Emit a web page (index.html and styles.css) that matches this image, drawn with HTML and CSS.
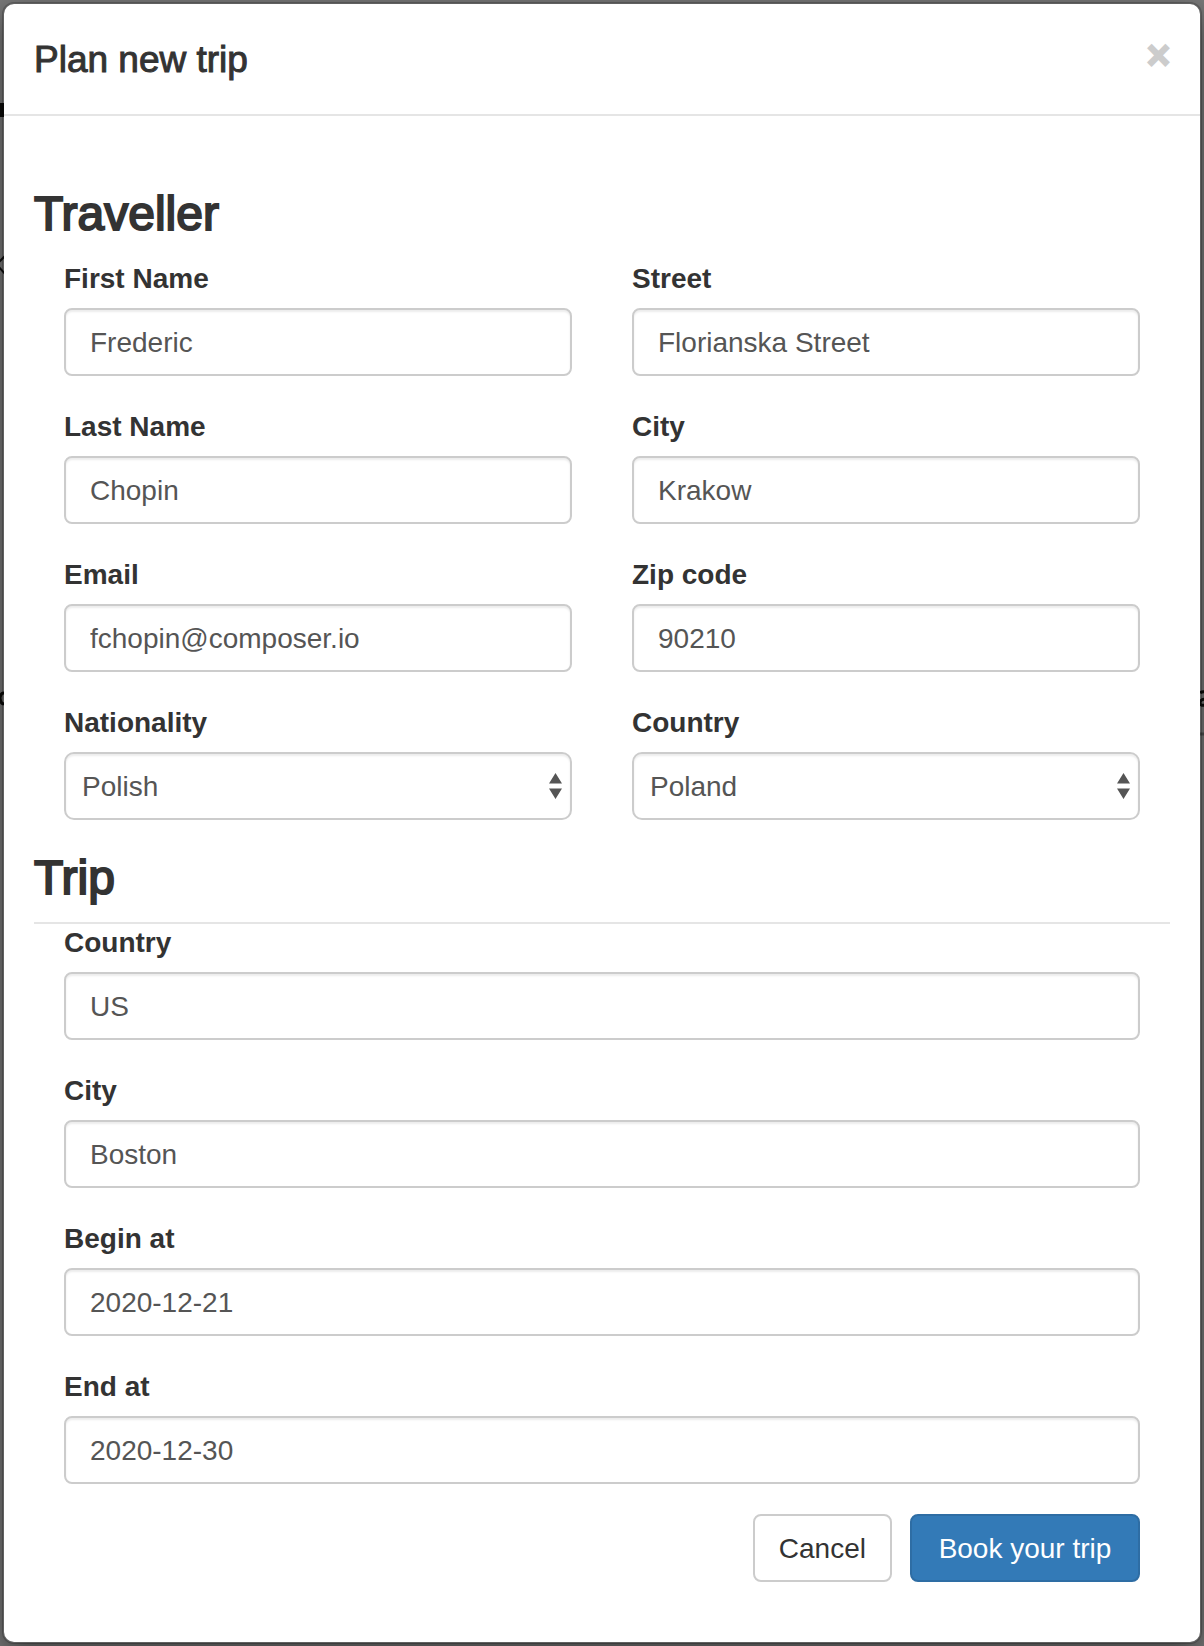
FILE: index.html
```html
<!DOCTYPE html>
<html lang="en">
<head>
<meta charset="utf-8">
<title>Plan new trip</title>
<link rel="stylesheet" href="styles.css">
</head>
<body>
<svg class="behind behind-left" width="4" height="720" aria-hidden="true">
  <path d="M0 103H4V117H0Z" fill="#0c0c0a"/>
  <path d="M-1 262L5 256M-1 267L5 274" fill="none" stroke="#111" stroke-width="2"/>
  <path d="M6 694Q1 691 0 698Q1 706 6 703" fill="none" stroke="#0c0c0a" stroke-width="3"/>
</svg>
<svg class="behind behind-right" width="4" height="740" aria-hidden="true">
  <path d="M0 693q2-2 6-1M0 705q-1-6 6-6M0 704q2 2 6 1" fill="none" stroke="#0c0c0a" stroke-width="3"/>
  <path d="M0 734H4" stroke="#505050" stroke-width="3"/>
</svg>
<div class="modal" role="dialog" aria-labelledby="modal-title">
  <header class="modal-header">
    <h1 class="modal-title" id="modal-title">Plan new trip</h1>
    <button class="close" type="button" aria-label="Close">×</button>
  </header>
  <form class="modal-body">
    <h2 class="section-title">Traveller</h2>
    <div class="fields fields-two">
      <div class="field"><label for="first">First Name</label><input id="first" type="text" value="Frederic"></div>
      <div class="field"><label for="street">Street</label><input id="street" type="text" value="Florianska Street"></div>
      <div class="field"><label for="last">Last Name</label><input id="last" type="text" value="Chopin"></div>
      <div class="field"><label for="city">City</label><input id="city" type="text" value="Krakow"></div>
      <div class="field"><label for="email">Email</label><input id="email" type="text" value="fchopin@composer.io"></div>
      <div class="field"><label for="zip">Zip code</label><input id="zip" type="text" value="90210"></div>
      <div class="field"><label for="nationality">Nationality</label>
        <div class="select"><select id="nationality"><option>Polish</option></select><svg class="arrows" width="13" height="26" aria-hidden="true"><path d="M6.5 0L13 10.5H0ZM0 15.5H13L6.5 26Z"/></svg></div></div>
      <div class="field"><label for="country">Country</label>
        <div class="select"><select id="country"><option>Poland</option></select><svg class="arrows" width="13" height="26" aria-hidden="true"><path d="M6.5 0L13 10.5H0ZM0 15.5H13L6.5 26Z"/></svg></div></div>
    </div>
    <h2 class="section-title section-ruled">Trip</h2>
    <div class="fields">
      <div class="field"><label for="trip-country">Country</label><input id="trip-country" type="text" value="US"></div>
      <div class="field"><label for="trip-city">City</label><input id="trip-city" type="text" value="Boston"></div>
      <div class="field"><label for="begin">Begin at</label><input id="begin" type="text" value="2020-12-21"></div>
      <div class="field"><label for="end">End at</label><input id="end" type="text" value="2020-12-30"></div>
    </div>
    <div class="actions">
      <button class="btn" type="button">Cancel</button>
      <button class="btn btn-primary" type="submit">Book your trip</button>
    </div>
  </form>
</div>
</body>
</html>
```
FILE: styles.css
```css
* { box-sizing: border-box; }

body {
  margin: 0;
  padding: 2px;
  background: #7a7a7a;
  color: #333;
  font-family: "Liberation Sans", Arial, sans-serif;
  font-size: 28px;
  line-height: 42px;
}

.modal {
  position: relative;
  background: #fff;
  background-clip: padding-box;
  border: 2px solid rgba(0, 0, 0, .2);
  border-radius: 12px;
  box-shadow: 0 10px 30px rgba(0, 0, 0, .5);
}

/* Page content showing past the dialog's edges */
.behind { position: absolute; top: 0; }
.behind-left { left: 0; }
.behind-right { right: 0; }

.modal-header {
  display: flex;
  justify-content: space-between;
  align-items: flex-start;
  padding: 30px 30px 28px;
  border-bottom: 2px solid #e5e5e5;
}

.modal-title,
.section-title {
  margin: 0;
  font-weight: 400;
}

.modal-title {
  font-size: 37px;
  line-height: 52px;
  -webkit-text-stroke: 1px #333;
}

.close {
  padding: 0;
  border: 0;
  background: none;
  color: #ccc;
  font: bold 40px/42px "Liberation Sans", Arial, sans-serif;
  -webkit-text-stroke: 2px #ccc;
}

.modal-body { padding: 70px 30px 60px; }

.section-title {
  font-size: 48px;
  line-height: 56px;
  padding-bottom: 16px;
  -webkit-text-stroke: 2px #333;
}

.section-ruled {
  margin-top: 30px;
  margin-bottom: -2px;
  border-bottom: 2px solid #e5e5e5;
}

.fields {
  display: grid;
  gap: 30px 60px;
  padding: 0 30px;
}

.fields-two { grid-template-columns: 1fr 1fr; }

.field {
  display: flex;
  flex-direction: column;
  gap: 8px;
}

label { font-weight: 700; }

input,
select {
  width: 100%;
  height: 68px;
  margin: 0;
  padding: 2px 24px 0;
  border: 2px solid #ccc;
  border-radius: 8px;
  background: #fff;
  box-shadow: inset 0 2px 2px rgba(0, 0, 0, .075);
  color: #555;
  font: inherit;
}

.select { position: relative; display: flex; }

select {
  appearance: none;
  padding: 2px 16px 0;
  border-radius: 10px;
}

.arrows {
  position: absolute;
  top: 21px;
  right: 10px;
  fill: #555;
  pointer-events: none;
}

.actions {
  display: flex;
  justify-content: flex-end;
  gap: 18px;
  padding: 30px 30px 0;
}

.btn {
  height: 68px;
  padding: 2px 24px 0;
  border: 2px solid #ccc;
  border-radius: 8px;
  background: #fff;
  color: #333;
  font: inherit;
}

.btn-primary {
  min-width: 230px;
  border-color: #2e6da4;
  background: #337ab7;
  color: #fff;
}
```
